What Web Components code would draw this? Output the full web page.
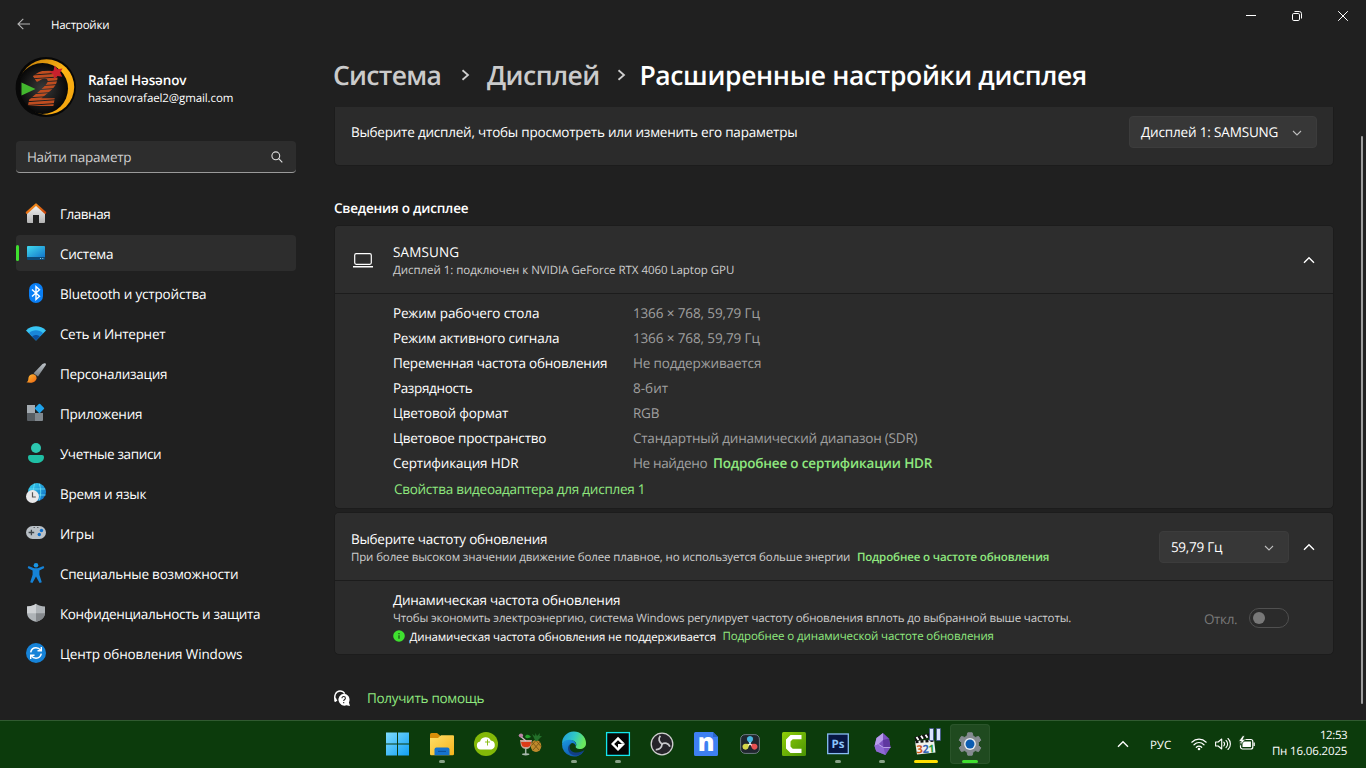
<!DOCTYPE html>
<html lang="ru">
<head>
<meta charset="utf-8">
<title>Настройки</title>
<style>
html,body{margin:0;height:100%;background:#202020;overflow:hidden}
body{font-family:"Open Sans","Noto Sans",sans-serif;color:#fff;text-rendering:geometricPrecision}
</style>
</head>
<body>
<settings-app></settings-app>
<script>
const ICONS = {
back:['0 0 14 14','<path d="M13 7H1M6.300 1.800L1 7l5.300 5.200" fill="none" stroke="#b4b4b4" stroke-width="1.100"/>'],
min:['0 0 10 10','<path d="M0 4.500h10" stroke="#fff"/>'],
restore:['0 0 10 10','<rect x=".5" y="2.500" width="7" height="7" rx="1.300" fill="none" stroke="#fff"/><path d="M2.500.5H7.300A2.200 2.200 0 0 1 9.500 2.700V7.500" fill="none" stroke="#fff"/>'],
close:['0 0 10 10','<path d="M.2.2l9.600 9.600M9.800.2L.2 9.800" stroke="#fff" fill="none"/>'],
search:['0 0 12 12','<circle cx="4.800" cy="4.800" r="3.900" fill="none" stroke="#ddd" stroke-width="1.100"/><path d="M7.700 7.700l3.600 3.600" stroke="#ddd" stroke-width="1.200"/>'],
down:['0 0 10 6','<path d="M1 1l4 4 4-4" fill="none" stroke="#bcbcbc" stroke-width="1.100"/>'],
up:['0 0 12 8','<path d="M1 6.700l5-5 5 5" fill="none" stroke="#fff" stroke-width="1.400"/>'],
right:['0 0 9 12','<path d="M1.500 1.200L7 6l-5.500 4.800" fill="none" stroke="#cfcfcf" stroke-width="1.800"/>'],
home:['0 0 20 20','<defs><linearGradient id="h" x2="0" y2="1"><stop stop-color="#f4f4f4"/><stop offset="1" stop-color="#b4b4b4"/></linearGradient><linearGradient id="r" x2="1"><stop stop-color="#e86e10"/><stop offset=".5" stop-color="#f08a1c"/><stop offset="1" stop-color="#c9440c"/></linearGradient></defs><path d="M1 9.500L10 1.800l9 7.700v9.500a1 1 0 0 1-1 1h-5v-8H7v8H2a1 1 0 0 1-1-1z" fill="url(#h)"/><path d="M.9 9.700L10 1.500l9.100 8.200" fill="none" stroke="url(#r)" stroke-width="2.300" stroke-linecap="round" stroke-linejoin="round"/>'],
system:['0 0 20 20','<defs><linearGradient id="s" x2="1" y2="1"><stop stop-color="#41dbef"/><stop offset="1" stop-color="#1376cb"/></linearGradient></defs><rect x="1" y="3" width="18" height="14" rx="1" fill="#0c4a78"/><path d="M1 4a1 1 0 0 1 1-1h16a1 1 0 0 1 1 1v10H1z" fill="url(#s)"/><circle cx="14.500" cy="15.500" r=".6" fill="#9edcf5"/><circle cx="16.800" cy="15.500" r=".6" fill="#9edcf5"/>'],
bt:['0 0 20 20','<rect x="3" y="0" width="14" height="20" rx="7" fill="#0a7ff5"/><path d="M6 6.500l7.500 6.700L10 16.500v-13l3.500 3.300L6 13.500" fill="none" stroke="#fff" stroke-width="1.400"/>'],
wifi:['0 0 20 20','<path d="M0 7.400C5.500 1.800 14.500 1.800 20 7.400L10 17.500z" fill="#38c5f4"/><path d="M2.900 10.200c4-3.800 10.200-3.800 14.200 0L10 17.500z" fill="#1986d8"/><path d="M6.200 13.500c2.200-2 5.400-2 7.600 0L10 17.500z" fill="#0b50a0"/>'],
brush:['0 0 20 20','<defs><linearGradient id="b" x2="0" y2="1"><stop stop-color="#bfc5ca"/><stop offset="1" stop-color="#757d83"/></linearGradient><linearGradient id="o" x2="1" y2="1"><stop stop-color="#ffc13a"/><stop offset="1" stop-color="#ee6410"/></linearGradient></defs><path d="M18.500.2c1.600-.3 1.800.9 1 2.200L12 13.500 7.600 10.200 16.500 1z" fill="url(#b)"/><path d="M7.500 11.300a3.700 3.700 0 0 1 2.300 6C7.700 20.500 3 20 .2 19.300c2.800-1 1.700-3.300 2.600-5.600.8-1.800 2.600-2.900 4.700-2.400z" fill="url(#o)"/>'],
apps:['0 0 20 20','<path d="M1 2h8v8H1z" fill="#a4abb1"/><path d="M1 10h8v8H2a1 1 0 0 1-1-1z" fill="#585e63"/><path d="M9 10h8v7a1 1 0 0 1-1 1H9z" fill="#81888e"/><rect x="9.900" y="1.800" width="7.200" height="7.200" rx="1" transform="rotate(45 13.500 5.400)" fill="#1ea3ec"/>'],
user:['0 0 20 20','<circle cx="10" cy="5" r="5" fill="#2cc7b0"/><path d="M4 12h12a2 2 0 0 1 2 2c0 4-3.500 6-8 6s-8-2-8-6a2 2 0 0 1 2-2z" fill="#1fbfa4"/>'],
time:['0 0 20 20','<defs><linearGradient id="t" x2="1" y2="1"><stop stop-color="#36d4ee"/><stop offset="1" stop-color="#0d66c2"/></linearGradient></defs><circle cx="11" cy="9" r="9" fill="url(#t)"/><path d="M3.500 6h15.500M3 12h16.500M8.800.5c-2 5-2 12 0 17M13.200.5c2 5 2 12 0 17" fill="none" stroke="#6be0f6" stroke-width=".8"/><circle cx="6.500" cy="13.500" r="6.500" fill="#e8e8ea"/><path d="M6.500 9.300v4.700h3.300" fill="none" stroke="#555" stroke-width="1.200"/>'],
game:['0 0 20 20','<rect x="0" y="3" width="20" height="13" rx="6.500" fill="#b9c0c6"/><path d="M2.600 9.500h5.600M5.400 6.700v5.600" stroke="#3c4348" stroke-width="1.300"/><circle cx="15.500" cy="7.500" r="1.700" fill="#0c6ecb"/><circle cx="13.300" cy="11.500" r="1.700" fill="#0c6ecb"/><path d="M7.500 4.500h1.500M11 4.500h1.500" stroke="#5c6368"/>'],
access:['0 0 20 20','<circle cx="10" cy="2.300" r="2.300" fill="#1a96e6"/><path d="M2.500 3l5.700 2.300h3.600L17.500 3l.8 1.900-4.900 2.700v4.200l2.400 7.400-2.200.8L10 13.600 6.400 20l-2.200-.8 2.400-7.400V7.600L1.700 4.900z" fill="#1583d8"/>'],
shield:['0 0 20 20','<path d="M10 .8c2.500 1.800 5.500 2.700 9 2.700v6c0 5-3.500 8-9 9.300C4.500 17.500 1 14.500 1 9.500v-6c3.500 0 6.500-.9 9-2.700z" fill="#aeb3b7"/><path d="M10 .8v9.500H1.100L1 3.500c3.500 0 6.500-.9 9-2.700z" fill="#ced1d4"/><path d="M10 10.300h8.900C18.600 14.600 15.300 17.600 10 18.800z" fill="#85898d"/>'],
update:['0 0 20 20','<circle cx="10" cy="10" r="10" fill="#1683d8"/><path d="M4.700 9.300c.6-2.800 2.700-4.500 5.300-4.500 2 0 3.500.8 4.700 2.300M15.300 10.700c-.6 2.800-2.700 4.500-5.300 4.500-2 0-3.500-.8-4.700-2.300" fill="none" stroke="#fff" stroke-width="1.500"/><path d="M15.300 4v3.800h-3.800M4.700 16v-3.800h3.800" fill="none" stroke="#fff" stroke-width="1.400"/>'],
laptop:['0 0 20 16','<rect x="1.700" y="1.700" width="16.600" height="10.600" rx="1.500" fill="none" stroke="#fff" stroke-width="1.200"/><path d="M0 14.800h20" stroke="#fff" stroke-width="1.400"/>'],
info:['0 0 12 12','<circle cx="6" cy="6" r="5.800" fill="#3fe02f"/><path d="M6 5.200v3.600M6 3v1.300" stroke="#173a12" stroke-width="1.100"/>'],
help:['0 0 16 16','<path d="M1.600 11.700C-.8 6 1.800 1 6 1c2.200 0 3.800 1 4.800 2.600" fill="none" stroke="#fff" stroke-width="1.300"/><path d="M1.500 7L.2 11.600l3.200-.6" fill="#fff"/><path d="M9.700 3.700a6 6 0 0 1 5.200 8.700l1.100 3.500-3.500-.6A6 6 0 1 1 9.700 3.700z" fill="#fff"/><path d="M8 8.200c0-2.300 3.400-2.100 3.400 0 0 1.300-1.700 1.300-1.700 2.700M9.700 12v1.200" fill="none" stroke="#222" stroke-width="1.100"/>'],
win:['0 0 24 24','<defs><linearGradient id="w" x2="1" y2="1"><stop stop-color="#7edcfd"/><stop offset="1" stop-color="#12a0f4"/></linearGradient></defs><path d="M0 .500h11v11H0zM12 .500h11v11H12zM0 12.500h11v11H0zM12 12.500h11v11H12z" fill="url(#w)"/>'],
folder:['0 0 24 24','<defs><linearGradient id="f" x2="1" y2="1"><stop stop-color="#ffdf68"/><stop offset="1" stop-color="#f5b41c"/></linearGradient></defs><path d="M0 2.500A1.500 1.500 0 0 1 1.500 1H7l3 2.500V8H0z" fill="#d88e08"/><path d="M0 6h8l3-2.700h12a1 1 0 0 1 1 1V22a1.300 1.300 0 0 1-1.300 1.300H1.300A1.300 1.300 0 0 1 0 22z" fill="url(#f)"/><path d="M4.500 23.300V17.500a2 2 0 0 1 2-2h11a2 2 0 0 1 2 2v5.800z" fill="#1673cc"/><path d="M8 19.400h8" stroke="#0c4f97"/>'],
cloud:['0 0 24 24','<circle cx="12" cy="12" r="12" fill="#83b808"/><path d="M6.500 17.500a4 4 0 0 1-.4-7.900A5.700 5.700 0 0 1 16.800 8.500a4.600 4.600 0 0 1 .6 9z" fill="#fff"/><path d="M13.500 7.500v6M11 10h5" stroke="#83b808" stroke-width=".9"/>'],
drink:['0 0 24 24','<path d="M2 8h12l-1.200 5.500C12 16.500 9 17 7.700 17S3.500 16 2.900 13.500z" fill="#c9a496"/><path d="M3 10h10.200l-1 3.500c-1.200 2-7 2-8.200 0z" fill="#dc3a18"/><path d="M7.700 16v6" stroke="#a3b5a6" stroke-width="1.500"/><ellipse cx="7.700" cy="22.300" rx="3.700" ry="1.100" fill="#a8b8ac"/><path d="M1 3l7 6" stroke="#dcb9ce" stroke-width="1.200"/><circle cx="3" cy="3.500" r="2.100" fill="#bb83a7"/><path d="M7 5c1-4 5-2 6 0-2 1-4 2-6 0z" fill="#24a32c"/><ellipse cx="18" cy="14" rx="5.300" ry="6" fill="#bf8a2c"/><path d="M14 10l7 8M18 8.500l5 6M22 10l-7 8M18 8.500l-4.500 5" stroke="#735112" stroke-width=".8"/><path d="M17.500 9L14 2l3 2 .5-3L19 4l3-3-.5 3L24 4l-5 5z" fill="#23702a"/>'],
edge:['0 0 24 24','<defs><linearGradient id="e" x2="1" y2=".3"><stop stop-color="#2098df"/><stop offset=".55" stop-color="#30c8c5"/><stop offset="1" stop-color="#6ae85d"/></linearGradient><linearGradient id="g" x2=".6" y2="1"><stop stop-color="#1c9ae2"/><stop offset="1" stop-color="#0e55ab"/></linearGradient></defs><path d="M0 12A12 12 0 0 1 24 11c.3 4-3 6-6.300 6-3.200 0-4.400-1.300-4-2.400C15 13 14.500 9 10 8.500 5 8 1 10 0 12z" fill="url(#e)"/><path d="M0 12C1 8.500 5.600 7 9.500 8c4 1 5.300 4 4.200 6-.5-2-1.700-3-3.700-3-4 1.500-4 8 2 10.500 4 1.200 7.500 0 10.400-3A12 12 0 0 1 0 12z" fill="url(#g)"/><path d="M9.500 11.500c-4 2.500-1.500 8.500 3.500 9 4 .5 7-1 9.400-2.500C19 25 9.500 25 7 20c-2-4-.5-7.500 2.500-8.500z" fill="#123f86"/>'],
gms:['0 0 24 24','<rect x=".6" y=".6" width="22.800" height="22.800" fill="#050505" stroke="#13e6ed" stroke-width="1.300"/><path d="M12 4.700l7 7h-3.200L12 8.200 8.200 12 12 15.800V12h7l-7 7-7-7z" fill="#fff"/>'],
obs:['0 0 24 24','<circle cx="12" cy="12" r="10.800" fill="#252329" stroke="#d0d0d0" stroke-width="1.300"/><g fill="none" stroke="#c9c9cc" stroke-width="1.700"><path d="M12.500 12.500C9 10 8 7 10.300 3.800"/><path d="M12.500 12.500C9 10 8 7 10.300 3.800" transform="rotate(120 12 12)"/><path d="M12.500 12.500C9 10 8 7 10.300 3.800" transform="rotate(240 12 12)"/></g>'],
nbox:['0 0 24 24','<path d="M1.500 0H19l5 5v17.500a1.500 1.500 0 0 1-1.500 1.500h-21A1.500 1.500 0 0 1 0 22.500v-21A1.500 1.500 0 0 1 1.500 0z" fill="#3e80f2"/><path d="M19 0l5 5h-5z" fill="#2a65cc"/><text x="12" y="19" text-anchor="middle" font-size="25" font-weight="800" fill="#fff">n</text>'],
davinci:['0 0 24 24','<rect x="2.600" y="2.600" width="18.800" height="18.800" rx="4.500" fill="#20262e" stroke="#6d7b80" stroke-width="1"/><path d="M12 12L9.300 8.500a3.100 3.100 0 1 1 5.400 0z" fill="#48b8df"/><path d="M12 12l-2 4.300a3 3 0 1 1-3-4.600z" fill="#d5d64a"/><path d="M12 12l2 4.300a3 3 0 1 0 3-4.600z" fill="#e75152"/><path d="M12 12v-2M12 12l-2 1.300M12 12l2 1.300" stroke="#fff"/>'],
cam:['0 0 24 24','<defs><linearGradient id="c" x2="1" y2="1"><stop stop-color="#8fce08"/><stop offset="1" stop-color="#4a9404"/></linearGradient></defs><rect width="24" height="24" rx="1.500" fill="url(#c)"/><path d="M19.500 3v4.300H10.700L8.500 9.500v5l2.200 2.200h8.800V21H8.500L4 16.500v-9L8.500 3z" fill="#fff"/>'],
ps:['0 0 24 24','<rect x="1.700" y="2" width="20.600" height="19.600" fill="#071643" stroke="#88bdf2" stroke-width="1.300"/><text x="12" y="16" text-anchor="middle" font-size="11.500" font-weight="700" fill="#8cc4fb">Ps</text>'],
obsidian:['0 0 24 24','<path d="M13 1l6 5.500 1.500 9L15.500 23l-9.300-3.700L4.500 14 6.500 6z" fill="#7c52c0"/><path d="M13 1L6.500 6l-2 8 4-1.700 4.500-4.300z" fill="#b79cea"/><path d="M4.500 14l4-1.700 5 3.200 2 7.500-9.300-3.700z" fill="#8f6ad3"/><path d="M13 8l6-1.500 1.500 9-7 0z" fill="#5f37a0"/><path d="M8.500 12.300L13.500 15.500 20.500 15.500" fill="none" stroke="#c9b5f2" stroke-width=".8"/>'],
mpc:['0 0 28 28','<path d="M3 13L22 11.500 23.500 24.500 5 26.500z" fill="#f1f1ee"/><path d="M2.500 9L20 4.500v4.300L3.500 13z" fill="#111"/><path d="M4.500 9l2 3M9 7.800l2 3M13.500 6.700l2 3" stroke="#fff" stroke-width="1.800"/><path d="M3.500 14l19-1.500" stroke="#111" stroke-width="2.500" stroke-dasharray="3 2"/><text x="4.500" y="24.800" font-size="11" font-weight="700" letter-spacing="-.4" transform="rotate(-3 14 20)"><tspan fill="#d45a1a">3</tspan><tspan fill="#3161b5">2</tspan><tspan fill="#2f9c36">1</tspan></text><path d="M17.500.500h4v12h-4zM24.500.500h4v12h-4z" fill="#dbe4fb" stroke="#384a8c" stroke-width=".7"/>'],
gear:['0 0 24 24','<path d="M9.800.8h4.400l.8 3.300 2.300 1.300 3.300-1 2.200 3.800-2.400 2.400v2.800l2.400 2.400-2.200 3.800-3.300-1-2.300 1.300-.8 3.300H9.800L9 19.900l-2.300-1.300-3.300 1-2.200-3.800 2.400-2.400v-2.800L1.200 8.200l2.200-3.800 3.300 1L9 4.100z" fill="#858b91" stroke="#858b91" stroke-linejoin="round"/><circle cx="12" cy="12" r="5.900" fill="#e9eef2"/><circle cx="12" cy="12" r="4.500" fill="#0b5cb1"/>'],
twifi:['0 0 16 16','<g fill="none" stroke="#fff" stroke-width="1.200" stroke-linecap="round"><path d="M.8 6.200c4.200-4 10.200-4 14.400 0M3 8.800c3-2.800 7-2.800 10 0M5.300 11.300c1.700-1.500 3.700-1.500 5.400 0"/></g><circle cx="8" cy="13" r="1.300" fill="#fff"/>'],
vol:['0 0 16 16','<g fill="none" stroke="#fff" stroke-width="1.100" stroke-linecap="round" stroke-linejoin="round"><path d="M.6 6v4h2.600L6.700 13V3L3.200 6zM8.800 6.200c.9 1 .9 2.600 0 3.600M11 4.300c2.100 2 2.100 5.400 0 7.400M13 2.500c3.200 3 3.200 8 0 11"/></g>'],
bat:['0 0 16 16','<rect x="1.500" y="3.500" width="12.300" height="9.500" rx="2" fill="none" stroke="#fff" stroke-width="1.200"/><path d="M3.500 5.500h8.400v5.500H3.500z" fill="#fff"/><path d="M14.500 6.500h1.300v3.500h-1.300z" fill="#fff"/><path d="M3.600-.3L-.5 5.500h2.600L1.200 9.300l5.300-5.600H3.900L5.800-.3z" fill="#fff" stroke="#0c3b0c" stroke-width=".8"/>'],
avatar:['0 0 60 60','<defs><pattern id="p" width="5" height="3.800" patternUnits="userSpaceOnUse" patternTransform="rotate(-4)"><rect width="5" height="2.800" fill="#c04d20"/></pattern><linearGradient id="y" x2="1" y2="1"><stop stop-color="#b87505"/><stop offset=".5" stop-color="#ffb515"/><stop offset="1" stop-color="#f0a00c"/></linearGradient><radialGradient id="k"><stop stop-color="#3a3a3a"/><stop offset="1" stop-color="#070707"/></radialGradient></defs><circle cx="30" cy="30" r="30" fill="#070707"/><circle cx="30.500" cy="30" r="27.700" fill="url(#y)"/><circle cx="26.500" cy="31.500" r="25.500" fill="url(#k)"/><path d="M3 22A28 28 0 0 0 18 56" fill="none" stroke="#080808" stroke-width="4"/><text transform="translate(10.500 49) skewX(-10)" font-size="49" font-weight="800" fill="url(#p)">2</text><path d="M38.500 8.500l3 3.800 5-.9-2.300 4.100 2.100 4.200-4.800-.8-3.600 3.200-.5-4.700-4.300-2.300 4.500-1.700z" fill="#c9202d"/><path d="M5.500 25.500L19.500 32 5.500 38.500z" fill="#43b72e"/>']
};

const define = (name, html, setup) => {
  const tpl = document.createElement('template');
  customElements.define(name, class extends HTMLElement {
    connectedCallback() {
      if (this.shadowRoot) return;
      tpl.innerHTML = typeof html === 'function' ? html(this) : html;
      this.attachShadow({mode:'open'}).append(tpl.content.cloneNode(true));
      if (setup) setup(this);
    }
  });
};

/* Vector icon: name, w, h */
define('ui-icon', el => {
  const [vb, art] = ICONS[el.getAttribute('name')];
  const w = el.getAttribute('w'), h = el.getAttribute('h') || w;
  return `<style>:host{display:block;flex:none;width:${w}px;height:${h}px}svg{display:block;overflow:visible}</style><svg width="${w}" height="${h}" viewBox="${vb}">${art}</svg>`;
});

/* One line of text; the tracking is adjusted so that it spans w pixels */
define('ui-text', `<style>
:host{display:block;flex:none;white-space:nowrap;font-size:13.5px;line-height:20px;width:max-content}
span{display:block;padding-left:.9px}
:host([kind=small]){font-size:11.5px;line-height:17px}
:host([kind=small]) span{padding-top:1px;margin-bottom:-1px}
:host([kind=title]){font-size:26.5px;line-height:36px;font-weight:600}
:host([strong]){font-weight:600}
:host([muted]){color:#cecece}
:host([dim]){color:#a0a0a0}
:host([link]){color:#8fe87f}
:host([off]){color:#787878}
</style><span><slot></slot></span>`, el => {
  const w = +el.getAttribute('w');
  if (w) {
    const natural = el.getBoundingClientRect().width;
    el.style.letterSpacing = ((w - .7 - natural) / el.textContent.length).toFixed(3) + 'px';
    el.style.width = w + 'px';
  }
});

define('title-bar', `<style>
:host{display:flex;height:48px;align-items:flex-start}
.back{margin:17px 19px 0 17px}
ui-text{margin-top:16px}
.buttons{display:flex;margin-left:auto}
.buttons div{width:46px;height:32px;display:grid;place-items:center}
</style><ui-icon class="back" name="back" w="14"></ui-icon><ui-text kind="small" w="60">Настройки</ui-text>
<div class="buttons"><div><ui-icon name="min" w="10"></ui-icon></div><div><ui-icon name="restore" w="10"></ui-icon></div><div><ui-icon name="close" w="10"></ui-icon></div></div>`);

define('profile-card', `<style>
:host{display:flex;height:60px;gap:11px}
.who{padding-top:13px}
.who ui-text + ui-text{margin-top:-1px}
</style><ui-icon name="avatar" w="60"></ui-icon><div class="who"><ui-text strong w="100">Rafael Həsənov</ui-text><ui-text kind="small" w="147">hasanovrafael2@gmail.com</ui-text></div>`);

define('search-box', `<style>
:host{display:flex;box-sizing:border-box;height:32px;margin-top:24px;padding:6px 13px 0 10px;background:#2d2d2d;border-radius:4px;border-bottom:1px solid #9a9a9a;justify-content:space-between}
ui-icon{margin-top:4px}
</style><ui-text muted w="106">Найти параметр</ui-text><ui-icon name="search" w="12"></ui-icon>`);

define('nav-item', el => `<style>
:host{display:flex;height:36px;border-radius:4px;align-items:flex-start}
:host([selected]){background:#2d2d2d}
.mark{width:3px;height:16px;margin-top:10px;border-radius:2px}
:host([selected]) .mark{background:#3fe02f}
ui-icon{margin:8px 13px 0 7px}
ui-text{margin-top:9px}
</style><div class="mark"></div><ui-icon name="${el.getAttribute('icon')}" w="20"></ui-icon><ui-text w="${el.getAttribute('w')}">${el.textContent}</ui-text>`);

define('side-nav', `<style>
:host{display:block;padding:9px 16px 0}
nav{display:flex;flex-direction:column;gap:4px;margin-top:22px}
</style><profile-card></profile-card><search-box></search-box><nav>
<nav-item icon="home" w="52">Главная</nav-item>
<nav-item icon="system" w="55" selected>Система</nav-item>
<nav-item icon="bt" w="148">Bluetooth и устройства</nav-item>
<nav-item icon="wifi" w="107">Сеть и Интернет</nav-item>
<nav-item icon="brush" w="109">Персонализация</nav-item>
<nav-item icon="apps" w="84">Приложения</nav-item>
<nav-item icon="user" w="103">Учетные записи</nav-item>
<nav-item icon="time" w="88">Время и язык</nav-item>
<nav-item icon="game" w="36">Игры</nav-item>
<nav-item icon="access" w="180">Специальные возможности</nav-item>
<nav-item icon="shield" w="202">Конфиденциальность и защита</nav-item>
<nav-item icon="update" w="184">Центр обновления Windows</nav-item>
</nav>`);

define('bread-crumb', `<style>
:host{display:flex;height:50px;padding-top:9px;margin-left:-2px}
ui-icon{margin:12px 16px 0 19px}
ui-icon + ui-text + ui-icon{margin:12px 13px 0 16px}
.grey{color:#cbcbcb}
</style><ui-text class="grey" kind="title" w="110">Система</ui-text><ui-icon name="right" w="9" h="12"></ui-icon><ui-text class="grey" kind="title" w="114.500">Дисплей</ui-text><ui-icon name="right" w="9" h="12"></ui-icon><ui-text kind="title" w="449">Расширенные настройки дисплея</ui-text>`);

define('drop-down', el => `<style>
:host{display:flex;flex:none;box-sizing:border-box;height:32px;padding:5px 14px 0 10px;border:1px solid #3c3c3c;border-radius:4px;background:#373737;justify-content:space-between}
ui-icon{margin-top:8px}
</style><ui-text w="${el.getAttribute('w')}">${el.textContent}</ui-text><ui-icon name="down" w="10" h="6"></ui-icon>`);

define('toggle-switch', `<style>
:host{display:block;box-sizing:border-box;width:40px;height:20px;border:1px solid #505050;border-radius:10px;padding:3px}
div{width:12px;height:12px;border-radius:50%;background:#787878}
</style><div></div>`);

/* Card with a header row and an optional body below a divider */
define('setting-card', `<style>
:host{display:block;border:1px solid #1c1c1c;border-radius:5px;background:#2b2b2b;overflow:hidden;box-sizing:border-box}
.head{height:67px;display:flex;background:#2d2d2d;border-bottom:1px solid #1c1c1c}
:host([cut]){border-top:0;border-radius:0 0 5px 5px;height:59px}
:host([cut]) .head{border:0;background:none}
</style><div class="head"><slot name="head"></slot></div><slot></slot>`);

define('info-row', el => `<style>
:host{display:grid;grid-template-columns:240px 1fr;height:25px}
.v{display:flex;gap:4px}
</style><ui-text w="${el.getAttribute('w')}">${el.getAttribute('label')}</ui-text><div class="v"><slot></slot></div>`);

define('display-page', `<style>
:host{display:block;width:1000px}
.row{display:flex;width:100%}
.pad{padding-left:15px}
.stack{margin-top:16px}
.stack > * + *{margin-top:-1px}
.section{margin:32px 0 7px -1px}
.chev{margin:30px 18px 0 0}
.rows{height:205px;padding:9px 0 0 57px}
.rows > ui-text{margin:1px 0 0 1px}
.dyn{display:flex;height:73px;padding-left:57px}
.line{display:flex}
.help{display:flex;margin-top:33px;gap:16px}
</style><bread-crumb></bread-crumb>
<setting-card cut><div slot="head" class="row"><ui-text style="margin:15px 0 0 15px" w="448">Выберите дисплей, чтобы просмотреть или изменить его параметры</ui-text><drop-down w="139" style="width:188px;margin:9px 16px 0 auto">Дисплей 1: SAMSUNG</drop-down></div></setting-card>
<ui-text strong class="section" w="136">Сведения о дисплее</ui-text>
<setting-card><div slot="head" class="row"><ui-icon name="laptop" w="20" h="16" style="margin:26px 19px 0 18px"></ui-icon><div class="stack"><ui-text w="68">SAMSUNG</ui-text><ui-text kind="small" muted w="343">Дисплей 1: подключен к NVIDIA GeForce RTX 4060 Laptop GPU</ui-text></div><ui-icon class="chev" style="margin-left:auto" name="up" w="12" h="8"></ui-icon></div>
<div class="rows">
<info-row label="Режим рабочего стола" w="148"><ui-text dim w="128.500">1366 × 768, 59,79 Гц</ui-text></info-row>
<info-row label="Режим активного сигнала" w="168"><ui-text dim w="128.500">1366 × 768, 59,79 Гц</ui-text></info-row>
<info-row label="Переменная частота обновления" w="216"><ui-text dim w="130">Не поддерживается</ui-text></info-row>
<info-row label="Разрядность" w="81"><ui-text dim w="37">8-бит</ui-text></info-row>
<info-row label="Цветовой формат" w="117"><ui-text dim w="28">RGB</ui-text></info-row>
<info-row label="Цветовое пространство" w="155"><ui-text dim w="286">Стандартный динамический диапазон (SDR)</ui-text></info-row>
<info-row label="Сертификация HDR" w="127"><ui-text dim w="76">Не найдено</ui-text><ui-text strong link w="221">Подробнее о сертификации HDR</ui-text></info-row>
<ui-text link w="253">Свойства видеоадаптера для дисплея 1</ui-text>
</div></setting-card>
<setting-card style="margin-top:3px"><div slot="head" class="row"><div class="stack pad"><ui-text w="198">Выберите частоту обновления</ui-text><div class="line" style="gap:5px"><ui-text kind="small" muted w="501">При более высоком значении движение более плавное, но используется больше энергии</ui-text><ui-text kind="small" strong link w="194">Подробнее о частоте обновления</ui-text></div></div><drop-down w="53" style="width:130px;margin:18px 14px 0 auto">59,79 Гц</drop-down><ui-icon class="chev" name="up" w="12" h="8"></ui-icon></div>
<div class="dyn"><div class="stack" style="margin-top:9px"><ui-text w="229">Динамическая частота обновления</ui-text><ui-text kind="small" muted w="680">Чтобы экономить электроэнергию, система Windows регулирует частоту обновления вплоть до выбранной выше частоты.</ui-text><div class="line" style="margin-top:1px"><ui-icon name="info" w="12" style="margin:3px 4px 0 .6px"></ui-icon><ui-text kind="small" w="308" style="margin-top:1px">Динамическая частота обновления не поддерживается</ui-text><ui-text kind="small" link w="273" style="margin-left:5px">Подробнее о динамической частоте обновления</ui-text></div></div><ui-text off w="35" style="margin:28px 0 0 auto">Откл.</ui-text><toggle-switch style="margin:27px 44px 0 11px"></toggle-switch></div></setting-card>
<div class="help"><ui-icon name="help" w="16" style="margin-top:2px"></ui-icon><ui-text link w="119">Получить помощь</ui-text></div>`);

define('task-item', el => {
  const big = el.getAttribute('icon') === 'mpc', c = {run:['6px','#87a287'],alert:['24px','#ffdf00'],active:['16px','#3fe02f']}[el.getAttribute('state')] || ['0','none'];
  return `<style>
:host{display:flex;flex-direction:column;align-items:center;width:40px;height:40px;border-radius:4px;box-sizing:border-box;${el.getAttribute('state')==='active'?'background:#1f4a1f;box-shadow:inset 0 0 0 1px #2a542a':''}}
ui-icon{margin-top:${big?4:8}px}
i{display:block;width:${c[0]};height:3px;margin-top:4px;border-radius:2px;background:${c[1]}}
</style><ui-icon name="${el.getAttribute('icon')}" w="${big?28:24}"></ui-icon><i></i>`;
});

define('task-bar', `<style>
:host{display:grid;grid-template-columns:1fr;height:48px;box-sizing:border-box;border-top:1px solid #315a31;background:#0c3b0c}
.apps,.tray{grid-area:1/1;display:flex}
.apps{gap:4px;padding:3px 0 0 378px}
.tray{justify-self:end;padding-right:18px}
.clock{display:flex;flex-direction:column;align-items:flex-end;margin-left:16px;padding-top:6px}
.clock ui-text{line-height:16px;color:#fff}
.s{margin:15px 8px 0 0}
</style><div class="apps">
<task-item icon="win"></task-item><task-item icon="folder" state="run"></task-item><task-item icon="cloud"></task-item><task-item icon="drink"></task-item><task-item icon="edge" state="run"></task-item><task-item icon="gms" state="run"></task-item><task-item icon="obs"></task-item><task-item icon="nbox"></task-item><task-item icon="davinci"></task-item><task-item icon="cam"></task-item><task-item icon="ps" state="run"></task-item><task-item icon="obsidian" state="run"></task-item><task-item icon="mpc" state="alert"></task-item><task-item icon="gear" state="active"></task-item></div>
<div class="tray"><ui-icon name="up" w="12" h="8" style="margin:19px 20px 0 0"></ui-icon><ui-text kind="small" w="23" style="margin:15px 19px 0 0">РУС</ui-text><ui-icon class="s" name="twifi" w="16"></ui-icon><ui-icon class="s" name="vol" w="16"></ui-icon><ui-icon name="bat" w="16" style="margin-top:15px"></ui-icon><div class="clock"><ui-text kind="small" w="29">12:53</ui-text><ui-text kind="small" w="77">Пн 16.06.2025</ui-text></div></div>`);

define('settings-app', `<style>
:host{display:grid;grid-template-rows:48px 672px 48px;width:1366px;height:768px}
.body{display:grid;grid-template-columns:312px 1000px 1fr;column-gap:22px}
.scroll{width:2px;height:568px;margin:88px 0 0 5px;border-radius:1px;background:#9c9c9c}
</style><title-bar></title-bar><div class="body"><side-nav></side-nav><display-page></display-page><div class="scroll"></div></div><task-bar></task-bar>`);
</script>
</body>
</html>
